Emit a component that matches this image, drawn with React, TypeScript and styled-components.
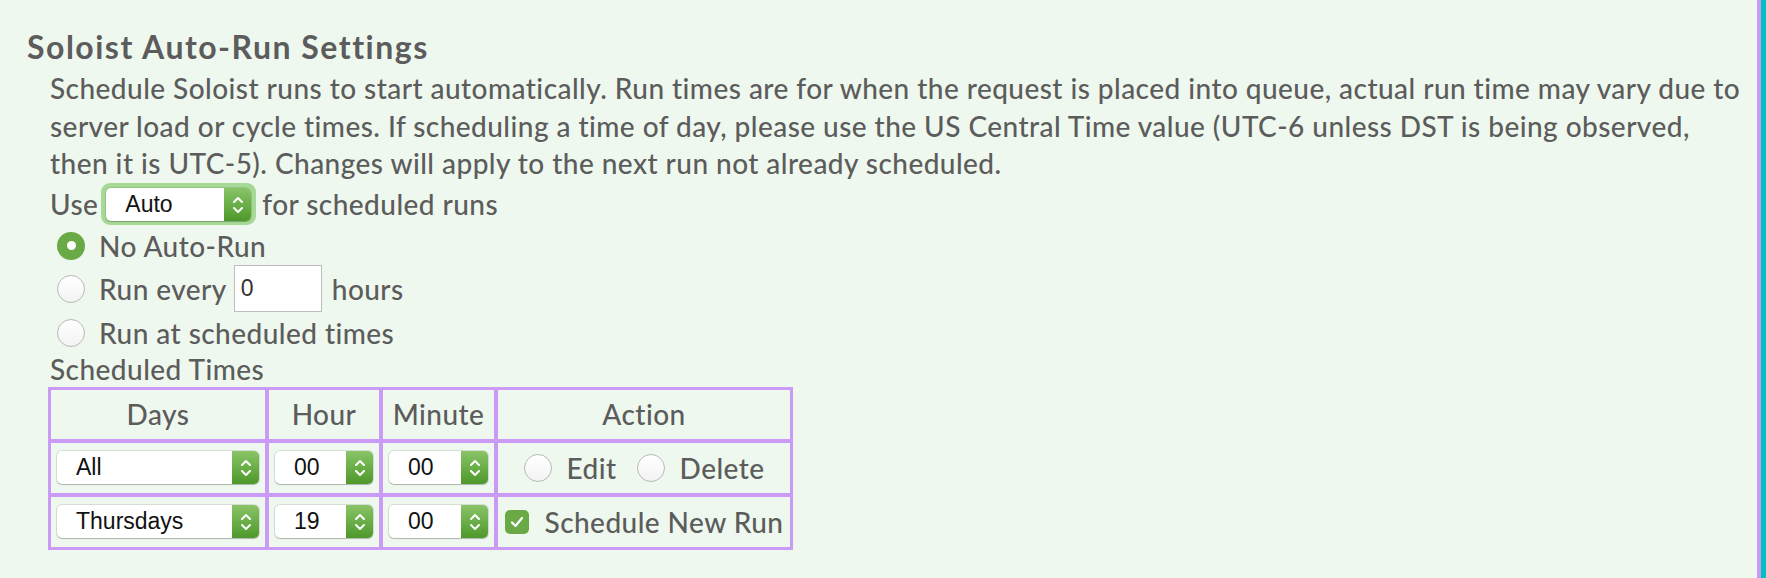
import React from 'react';
import styled, { createGlobalStyle, css } from 'styled-components';

const GlobalStyle = createGlobalStyle`
  html, body {
    margin: 0;
    padding: 0;
  }
  body {
    background: #00bec4;
    color: #5c5c5c;
    font-family: "Comic Sans MS", "Lato", sans-serif;
  }
`;

const Page = styled.div`
  height: 578px;
  box-sizing: border-box;
  margin-right: 5px;
  padding: 28px 4px 0 27px;
  background: #eef8ee;
  border-right: 4px solid #c99bf7;
`;

const Title = styled.h2`
  margin: 0;
  font-size: 32px;
  line-height: 38px;
  font-weight: bold;
  letter-spacing: 1.5px;
`;

const Body = styled.div`
  margin: 4px 0 0 23px;
  font-size: 28px;
  font-weight: 500;
  letter-spacing: 0.45px;
`;

const Intro = styled.p`
  margin: 0;
  line-height: 37.5px;
`;

const Line = styled.div<{ $h: number }>`
  display: flex;
  align-items: center;
  height: ${p => p.$h}px;
  white-space: nowrap;
`;

const Ring = styled.span`
  display: inline-flex;
  padding: 5px 5px 4px;
  margin: 0 6px 0 3px;
  border-radius: 9px;
  background: #a6d995;
`;

const SelectBox = styled.div<{ $w: number }>`
  display: inline-flex;
  width: ${p => p.$w}px;
  height: 33px;
  border-radius: 5px;
  overflow: hidden;
  background: #fff;
  box-shadow: 0 0 0 1px rgba(0, 0, 0, 0.1), 0 1px 1px rgba(0, 0, 0, 0.18);
  font-family: "Liberation Sans", Arial, sans-serif;
  font-size: 23px;
  font-weight: normal;
  letter-spacing: 0;
  color: #111;
`;

const SelectText = styled.span`
  flex: 1;
  display: flex;
  align-items: center;
  padding-left: 19px;
`;

const SelectArrow = styled.span`
  width: 27px;
  display: flex;
  align-items: center;
  justify-content: center;
  background: linear-gradient(#8ac467, #4d982a);
`;

const Radio = styled.span<{ $on?: boolean }>`
  flex: none;
  display: inline-flex;
  align-items: center;
  justify-content: center;
  box-sizing: border-box;
  width: 28px;
  height: 28px;
  border-radius: 50%;
  ${p => p.$on
    ? css`
        background: #69a946;
        &::after {
          content: '';
          width: 9px;
          height: 9px;
          border-radius: 50%;
          background: #fff;
        }
      `
    : css`
        background: linear-gradient(#fff, #f3f3f3);
        border: 1px solid #b9b9b9;
      `}
`;

const Option = styled(Line)`
  padding-left: 7px;
  gap: 14px;
`;

const HoursInput = styled.input`
  box-sizing: border-box;
  width: 88px;
  height: 47px;
  margin: 0 -4px 0 -7px;
  padding: 0 6px;
  border: 1px solid #bdbdbd;
  background: #fff;
  font-family: "Liberation Sans", Arial, sans-serif;
  font-size: 23px;
  color: #333;
  outline: none;
`;

const Caption = styled.div`
  line-height: 33px;
  margin-top: -1px;
`;

const Times = styled.table`
  margin: 1px 0 0 -2px;
  width: 745px;
  table-layout: fixed;
  border-collapse: separate;
  border-spacing: 0;
  border: 1px solid #c99bf7;
  font-size: 28px;
  color: #5c5c5c;
`;

const Head = styled.th<{ $w: number }>`
  box-sizing: border-box;
  width: ${p => p.$w}px;
  height: 53px;
  padding: 0;
  border: 2px solid #c99bf7;
  font-weight: 500;
  text-align: center;
`;

const Cell = styled.td`
  box-sizing: border-box;
  height: 54px;
  padding: 0;
  border: 2px solid #c99bf7;
`;

const CellRow = styled.div`
  display: flex;
  align-items: center;
  justify-content: center;
  gap: 16px;
  white-space: nowrap;
`;

const Choice = styled.span`
  display: inline-flex;
  align-items: center;
  gap: 15px;
  & + & {
    margin-left: 4px;
  }
`;

const Check = styled.span`
  flex: none;
  display: inline-flex;
  align-items: center;
  justify-content: center;
  width: 24px;
  height: 24px;
  border-radius: 5px;
  background: #69a946;
`;

const Chevrons = () => (
  <svg width="14" height="26" viewBox="0 0 14 26">
    <path d="M3 10 L7 6 L11 10 M3 16 L7 20 L11 16" fill="none" stroke="#fff" strokeWidth="2" strokeLinecap="round" strokeLinejoin="round" />
  </svg>
);

const Select = ({ value, width }: { value: string; width: number }) => (
  <SelectBox $w={width}>
    <SelectText>{value}</SelectText>
    <SelectArrow><Chevrons /></SelectArrow>
  </SelectBox>
);

const App = () => {
  return (
    <>
      <GlobalStyle />
      <Page>
        <Title>Soloist Auto-Run Settings</Title>
        <Body>
          <Intro>
            Schedule Soloist runs to start automatically. Run times are for when the request is placed into queue, actual run time may vary due to server load or cycle times. If scheduling a time of day, please use the US Central Time value (UTC-6 unless DST is being observed, then it is UTC-5). Changes will apply to the next run not already scheduled.
          </Intro>
          <Line $h={43}>
            Use
            <Ring><Select value="Auto" width={145} /></Ring>
            for scheduled runs
          </Line>
          <Option $h={40}><Radio $on />No Auto-Run</Option>
          <Option $h={46}>
            <Radio />Run every
            <HoursInput defaultValue="0" />
            hours
          </Option>
          <Option $h={42}><Radio />Run at scheduled times</Option>
          <Caption>Scheduled Times</Caption>
          <Times>
            <thead>
              <tr>
                <Head $w={218}>Days</Head>
                <Head $w={114}>Hour</Head>
                <Head $w={115}>Minute</Head>
                <Head $w={296}>Action</Head>
              </tr>
            </thead>
            <tbody>
              <tr>
                <Cell><CellRow><Select value="All" width={202} /></CellRow></Cell>
                <Cell><CellRow><Select value="00" width={98} /></CellRow></Cell>
                <Cell><CellRow><Select value="00" width={99} /></CellRow></Cell>
                <Cell>
                  <CellRow>
                    <Choice><Radio />Edit</Choice>
                    <Choice><Radio />Delete</Choice>
                  </CellRow>
                </Cell>
              </tr>
              <tr>
                <Cell><CellRow><Select value="Thursdays" width={202} /></CellRow></Cell>
                <Cell><CellRow><Select value="19" width={98} /></CellRow></Cell>
                <Cell><CellRow><Select value="00" width={99} /></CellRow></Cell>
                <Cell>
                  <CellRow>
                    <Check>
                      <svg width="16" height="16" viewBox="0 0 16 16">
                        <path d="M3 8.5 L6.5 12 L13 4" fill="none" stroke="#fff" strokeWidth="2.2" strokeLinecap="round" strokeLinejoin="round" />
                      </svg>
                    </Check>
                    Schedule New Run
                  </CellRow>
                </Cell>
              </tr>
            </tbody>
          </Times>
        </Body>
      </Page>
    </>
  );
};

export default App;
